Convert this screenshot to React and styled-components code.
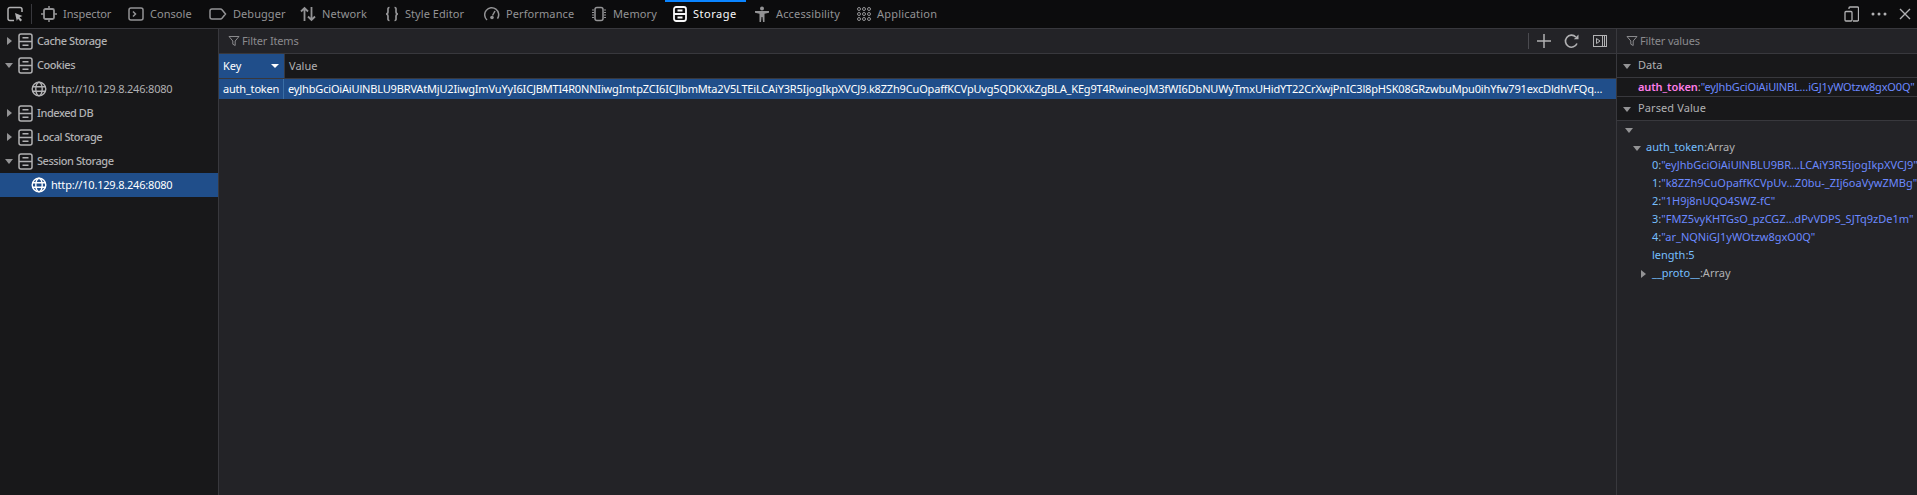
import React from "react";
import styled, { createGlobalStyle } from "styled-components";

const Global = createGlobalStyle`
  * { box-sizing: border-box; }
  html, body { margin: 0; padding: 0; height: 495px; overflow: hidden; background: #232327; }
  body { font-family: "Noto Sans", "Open Sans", sans-serif; font-size: 11px; color: #b1b1b3; }
  #root { height: 495px; }
`;

const Page = styled.div`display: flex; flex-direction: column; width: 1917px; height: 495px;`;
const Toolbar = styled.div`display: flex; align-items: center; height: 29px; background: #0c0c0d; border-bottom: 1px solid #38383d; flex: none;`;
const Picker = styled.div`width: 31px; height: 28px; display: flex; align-items: center; padding-left: 7px; flex: none;`;
const Divider = styled.div`width: 1px; height: 20px; background: #38383d; flex: none; margin-right: 1px;`;
const Label = styled.span`margin-bottom: 2px; letter-spacing: ${p => p.$ls || 0}px;`;
const Tab = styled.div`
  display: flex; align-items: center; gap: 6px; height: 28px; padding: 0 8px; flex: none;
  width: ${p => p.$w}px;
  color: ${p => (p.$active ? "#f9f9fa" : "#939395")};
  box-shadow: ${p => (p.$active ? "inset 0 2px 0 #0a84ff" : "none")};
  white-space: nowrap;
  svg { flex: none; }
`;
const Right = styled.div`margin-left: auto; display: flex; align-items: center; gap: 12px; padding-right: 6px; color: #b1b1b3;`;
const Body = styled.div`flex: 1; display: flex; min-height: 0;`;
const Sidebar = styled.div`width: 219px; flex: none; background: #18181a; border-right: 1px solid #38383d;`;
const TreeRow = styled.div`
  height: 24px; display: flex; align-items: center; white-space: nowrap;
  padding-left: ${p => (p.$child ? 31 : 4)}px; gap: 4px;
  font-weight: ${p => (p.$child ? 400 : 500)};
  background: ${p => (p.$selected ? "#204e8a" : "transparent")};
  color: ${p => (p.$selected ? "#fff" : "#b1b1b3")};
  svg { flex: none; }
`;
const Main = styled.div`flex: 1; min-width: 0; display: flex; flex-direction: column; background: #232327;`;
const FilterBar = styled.div`
  height: 25px; flex: none; display: flex; align-items: center; gap: 2px; padding-left: 9px;
  background: #232327; border-bottom: 1px solid #38383d; color: #8a8a8d;
`;
const ActionGroup = styled.div`margin-left: auto; display: flex; align-items: center; gap: 13px; padding-right: 9px; height: 100%;`;
const ActionSep = styled.div`width: 1px; height: 16px; background: #4a4a4f; margin-right: -5px;`;
const HeaderRow = styled.div`height: 25px; flex: none; display: flex; background: #18181a; border-bottom: 1px solid #38383d;`;
const KeyHead = styled.div`
  width: 65px; flex: none; background: #204e8a; color: #fff; display: flex; align-items: center;
  justify-content: space-between; padding: 0 5px 0 4px;
`;
const ValueHead = styled.div`flex: 1; display: flex; align-items: center; padding-left: 4px; color: #b1b1b3; border-left: 1px solid #38383d;`;
const DataRow = styled.div`height: 20px; flex: none; display: flex; background: #204e8a; color: #fff; align-items: center;`;
const KeyCell = styled.div`width: 65px; flex: none; padding-left: 4px; white-space: nowrap; border-right: 1px solid #3a6ea5; line-height: 20px; letter-spacing: -0.2px;`;
const ValueCell = styled.div`flex: 1; min-width: 0; padding: 0 6px 0 4px; overflow: hidden; white-space: nowrap; line-height: 20px; letter-spacing: -0.17px;`;
const Inspector = styled.div`width: 301px; flex: none; background: #232327; border-left: 1px solid #38383d; display: flex; flex-direction: column;`;
const SectionHead = styled.div`
  height: ${p => p.$h}px; flex: none; display: flex; align-items: center; gap: 6px; padding-left: 5px;
  background: #18181a; border-bottom: 1px solid #38383d; color: #b1b1b3;
`;
const DataLine = styled.div`height: 19px; flex: none; padding-left: 21px; background: #18181a; border-bottom: 1px solid #38383d; white-space: nowrap; line-height: 17px; overflow: hidden;`;
const Pink = styled.span`color: #ff7de9; font-weight: 600; letter-spacing: -0.1px;`;
const Str = styled.span`color: #6b89ff; letter-spacing: ${p => p.$ls || 0}px;`;
const KeyName = styled.span`color: #75bfff;`;
const Gray = styled.span`color: #b1b1b3;`;
const ParsedRow = styled.div`
  height: 18px; display: flex; align-items: center; white-space: nowrap; gap: 4px;
  padding-left: ${p => p.$indent}px; line-height: 18px;
  svg { flex: none; }
`;

const Arrow = ({ down, color = "#939395" }) => (
  <svg width="10" height="10" viewBox="0 0 10 10">
    {down ? <path d="M1 3h8L5 8z" fill={color} /> : <path d="M3 1v8l5-4z" fill={color} />}
  </svg>
);
const Cabinet = () => (
  <svg width="15" height="17" viewBox="0 0 15 17" fill="none" stroke="currentColor" strokeWidth="1.5">
    <rect x="1" y="1" width="13" height="15" rx="2" />
    <path d="M1 8.500h13M4.500 4.800h6M4.500 12.200h6" />
  </svg>
);
const Globe = () => (
  <svg width="16" height="16" viewBox="0 0 16 16" fill="none" stroke="currentColor" strokeWidth="1.4">
    <circle cx="8" cy="8" r="6.8" />
    <ellipse cx="8" cy="8" rx="3.2" ry="6.8" />
    <path d="M1.500 5.700h13M1.500 10.300h13" />
  </svg>
);
const Funnel = () => (
  <svg width="12" height="12" viewBox="0 0 12 12" fill="none" stroke="currentColor" strokeWidth="1">
    <path d="M1 1.500h10L7.200 6v4.500L4.800 9.200V6z" />
  </svg>
);
const ic = { width: 16, height: 16, viewBox: "0 0 16 16", fill: "none", stroke: "currentColor", strokeWidth: 1.5 };
const PickIcon = () => (
  <svg width="17" height="17" viewBox="0 0 17 17" fill="none" stroke="#b1b1b3" strokeWidth="1.5">
    <path d="M7 14.500H3a2 2 0 0 1-2-2V3.500a2 2 0 0 1 2-2h10a2 2 0 0 1 2 2V6" />
    <path d="M8 7l7.500 3-3 1.200L15 14l-1.500 1.500-2.500-2.800L9.800 15z" fill="#b1b1b3" stroke="none" />
  </svg>
);
const InspectorIcon = () => (
  <svg {...ic}><rect x="3" y="3" width="10" height="10" rx="1.500" strokeWidth="1.800" /><path d="M8 0v3M8 13v3M0 8h3M13 8h3" /></svg>
);
const ConsoleIcon = () => (
  <svg {...ic}><rect x="1" y="2" width="14" height="12" rx="2" /><path d="M5 5.500L7.500 8 5 10.500" /></svg>
);
const DebuggerIcon = () => (
  <svg width="18" height="16" viewBox="0 0 18 16" fill="none" stroke="currentColor" strokeWidth="1.500"><path d="M3 3h8.500a2 2 0 0 1 1.500.7L16.500 8 13 12.300a2 2 0 0 1-1.500.7H3a2 2 0 0 1-2-2V5a2 2 0 0 1 2-2z" /></svg>
);
const NetworkIcon = () => (
  <svg {...ic} strokeWidth="1.800"><path d="M4.500 15V2M1 5.500L4.500 2 8 5.500M11.500 1v13M8 10.500l3.500 3.500 3.500-3.500" /></svg>
);
const BracesIcon = () => (
  <svg width="14" height="16" viewBox="0 0 14 16" fill="none" stroke="currentColor" strokeWidth="1.700"><path d="M4.500 1.500C2.500 1.500 3 3 3 5.500 3 7 2.500 8 1 8c1.500 0 2 1 2 2.500 0 2.500-.5 4 1.500 4M9.500 1.500c2 0 1.500 1.500 1.500 4C11 7 11.500 8 13 8c-1.500 0-2 1-2 2.500 0 2.500.5 4-1.500 4" /></svg>
);
const PerfIcon = () => (
  <svg {...ic}><path d="M3 14a7 7 0 1 1 10.500-1.300" /><path d="M8.500 9.500L11 5" /><circle cx="8" cy="11.500" r="1.800" fill="currentColor" stroke="none" /></svg>
);
const MemoryIcon = () => (
  <svg {...ic} strokeWidth="1.200"><rect x="4" y="1.500" width="8" height="13" rx="2" strokeWidth="1.500" /><path d="M1 4h2M1 6.500h2M1 9h2M1 11.500h2M13 4h2M13 6.500h2M13 9h2M13 11.500h2" /></svg>
);
const StorageIcon = () => (
  <svg width="14" height="16" viewBox="0 0 14 16" fill="none" stroke="#f9f9fa" strokeWidth="1.800"><rect x="1" y="1" width="12" height="14" rx="2.200" /><path d="M1 8h12M4.500 4.500h5M4.500 11.500h5" /></svg>
);
const A11yIcon = () => (
  <svg {...ic} fill="currentColor" stroke="none"><circle cx="8" cy="2.500" r="2" /><path d="M1 5h14v1.800l-4.500 1V16H9l-.5-5h-1L7 16H5.500V7.800L1 6.800z" /></svg>
);
const AppIcon = () => (
  <svg width="14" height="14" viewBox="0 0 14 14" fill="none" stroke="currentColor" strokeWidth="1">
    {[2, 7, 12].flatMap(y => [2, 7, 12].map(x => <circle key={x + "-" + y} cx={x} cy={y} r="1.500" />))}
  </svg>
);
const DockIcon = () => (
  <svg width="15" height="16" viewBox="0 0 15 16" fill="none" stroke="currentColor" strokeWidth="1.300"><path d="M5 3V2a1 1 0 0 1 1-1h7.500a1 1 0 0 1 1 1v12a1 1 0 0 1-1 1H9" /><rect x="1" y="5.500" width="7" height="9.500" rx="1" /></svg>
);
const DotsIcon = () => (
  <svg width="16" height="4" viewBox="0 0 16 4" fill="currentColor"><circle cx="2" cy="2" r="1.500" /><circle cx="8" cy="2" r="1.500" /><circle cx="14" cy="2" r="1.500" /></svg>
);
const CloseIcon = () => (
  <svg width="12" height="12" viewBox="0 0 12 12" fill="none" stroke="currentColor" strokeWidth="1.400"><path d="M1 1l10 10M11 1L1 11" /></svg>
);
const PlusIcon = () => (
  <svg width="14" height="14" viewBox="0 0 14 14" fill="none" stroke="#b1b1b3" strokeWidth="1.500"><path d="M7 0v14M0 7h14" /></svg>
);
const ReloadIcon = () => (
  <svg width="16" height="15" viewBox="0 0 16 15" fill="none" stroke="#b1b1b3" strokeWidth="1.600"><path d="M13 9.500A6 6 0 1 1 11.800 3" /><path d="M14.500.5v4.800H9.800" fill="#b1b1b3" stroke="none" /></svg>
);
const PaneIcon = () => (
  <svg width="14" height="12" viewBox="0 0 14 12" fill="none" stroke="#b1b1b3" strokeWidth="1"><rect x=".5" y=".5" width="13" height="11" /><path d="M9.500 .5v11M11.500 .5v11M3.500 3.500v5L7 6z" /></svg>
);

const TABS = [
  ["Inspector", InspectorIcon, 87, false, -0.1],
  ["Console", ConsoleIcon, 81, false, 0.05],
  ["Debugger", DebuggerIcon, 91, false, 0.05],
  ["Network", NetworkIcon, 85, false, 0.1],
  ["Style Editor", BracesIcon, 99, false, 0.05],
  ["Performance", PerfIcon, 107, false, 0.1],
  ["Memory", MemoryIcon, 82, false, 0.1],
  ["Storage", StorageIcon, 81, true, 0.5],
  ["Accessibility", A11yIcon, 103, false, 0.15],
  ["Application", AppIcon, 95, false, 0.2],
];
const TREE = [
  { label: "Cache Storage", ls: -0.45 },
  { label: "Cookies", open: true, ls: -0.45 },
  { label: "http://10.129.8.246:8080", child: true, ls: -0.2 },
  { label: "Indexed DB", ls: -0.45 },
  { label: "Local Storage", ls: -0.45 },
  { label: "Session Storage", open: true, ls: -0.45 },
  { label: "http://10.129.8.246:8080", child: true, selected: true, ls: -0.2 },
];
const TOKEN = "eyJhbGciOiAiUlNBLU9BRVAtMjU2IiwgImVuYyI6ICJBMTI4R0NNIiwgImtpZCI6ICJlbmMta2V5LTEiLCAiY3R5IjogIkpXVCJ9.k8ZZh9CuOpaffKCVpUvg5QDKXkZgBLA_KEg9T4RwineoJM3fWI6DbNUWyTmxUHidYT22CrXwjPnIC3l8pHSK08GRzwbuMpu0ihYfw791excDldhVFQq…";
const PARTS = [
  ["0", '"eyJhbGciOiAiUlNBLU9BR…LCAiY3R5IjogIkpXVCJ9"'],
  ["1", '"k8ZZh9CuOpaffKCVpUv…Z0bu-_ZIj6oaVywZMBg"'],
  ["2", '"1H9j8nUQO4SWZ-fC"'],
  ["3", '"FMZ5vyKHTGsO_pzCGZ…dPvVDPS_SJTq9zDe1m"'],
  ["4", '"ar_NQNiGJ1yWOtzw8gxO0Q"'],
];

export default function App() {
  return (
    <Page>
      <Global />
      <Toolbar>
        <Picker><PickIcon /></Picker>
        <Divider />
        {TABS.map(([name, Icon, w, active, ls]) => (
          <Tab key={name} $w={w} $active={active}><Icon /><Label $ls={ls}>{name}</Label></Tab>
        ))}
        <Right><DockIcon /><DotsIcon /><CloseIcon /></Right>
      </Toolbar>
      <Body>
        <Sidebar>
          {TREE.map((t, i) => (
            <TreeRow key={i} $child={t.child} $selected={t.selected}>
              {t.child ? <Globe /> : <><Arrow down={t.open} /><Cabinet /></>}
              <Label $ls={t.ls}>{t.label}</Label>
            </TreeRow>
          ))}
        </Sidebar>
        <Main>
          <FilterBar>
            <Funnel /><Label $ls={-0.15}>Filter Items</Label>
            <ActionGroup><ActionSep /><PlusIcon /><ReloadIcon /><PaneIcon /></ActionGroup>
          </FilterBar>
          <HeaderRow>
            <KeyHead><Label>Key</Label><svg width="8" height="6" viewBox="0 0 8 6"><path d="M0 1h8L4 5z" fill="#fff" /></svg></KeyHead>
            <ValueHead><Label>Value</Label></ValueHead>
          </HeaderRow>
          <DataRow>
            <KeyCell>auth_token</KeyCell>
            <ValueCell>{TOKEN}</ValueCell>
          </DataRow>
        </Main>
        <Inspector>
          <FilterBar><Funnel /><Label $ls={-0.15}>Filter values</Label></FilterBar>
          <SectionHead $h={24}><Arrow down /><Label>Data</Label></SectionHead>
          <DataLine><Pink>auth_token</Pink><Gray>:</Gray><Str $ls={-0.15}>"eyJhbGciOiAiUlNBL…iGJ1yWOtzw8gxO0Q"</Str></DataLine>
          <SectionHead $h={24}><Arrow down /><Label $ls={0.1}>Parsed Value</Label></SectionHead>
          <div>
            <ParsedRow $indent={7}><Arrow down /></ParsedRow>
            <ParsedRow $indent={15}><Arrow down /><Label><KeyName>auth_token</KeyName><Gray>:Array</Gray></Label></ParsedRow>
            {PARTS.map(([k, v]) => (
              <ParsedRow key={k} $indent={35}><Label><KeyName>{k}</KeyName><Gray>:</Gray><Str>{v}</Str></Label></ParsedRow>
            ))}
            <ParsedRow $indent={35}><Label><KeyName>length</KeyName><Gray>:</Gray><KeyName>5</KeyName></Label></ParsedRow>
            <ParsedRow $indent={21}><Arrow /><Label><KeyName>__proto__</KeyName><Gray>:Array</Gray></Label></ParsedRow>
          </div>
        </Inspector>
      </Body>
    </Page>
  );
}
